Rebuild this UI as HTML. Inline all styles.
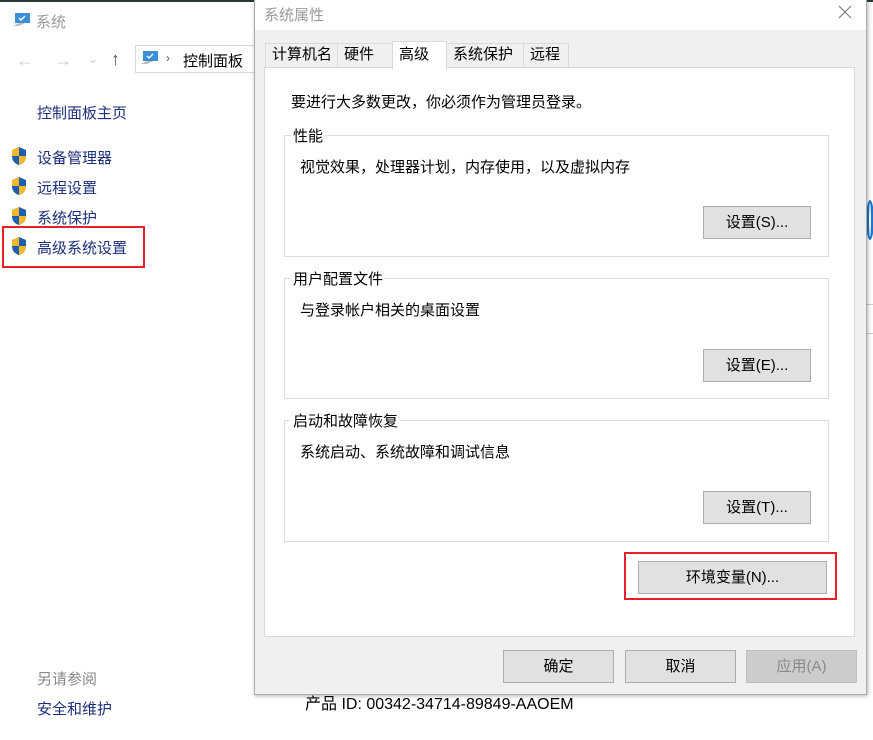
<!DOCTYPE html>
<html><head><meta charset="utf-8"><style>
*{margin:0;padding:0;box-sizing:border-box}
body{width:873px;height:740px;overflow:hidden;background:#fff;position:relative;font-family:"Liberation Sans","Noto Sans CJK SC",sans-serif;font-size:15px;color:#000}
.a{position:absolute}
.btn{position:absolute;background:#e1e1e1;border:1px solid #adadad;text-align:center;font-size:15px}
.grp{position:absolute;border:1px solid #dcdcdc}
.grp .t{position:absolute;top:-11px;left:6px;background:#fff;padding:0 2px;font-size:15px}
.tab{position:absolute;top:43px;height:24px;border:1px solid #d9d9d9;border-bottom:none;background:#f0f0f0;font-size:15px;line-height:22px;padding-left:6px}
.sh{position:absolute;width:18px;height:20px}
</style></head><body>
<div class="a" style="left:0;top:0;width:873px;height:2px;background:#2a3a30"></div>
<svg class="a" style="left:12px;top:12px" width="20" height="18" viewBox="0 0 20 18"><rect x="3" y="1" width="15" height="10" fill="#3a8fd8"/><path d="M7 6l2 2 4-4" stroke="#fff" stroke-width="1.4" fill="none"/><path d="M1 14l6-3h6l-6 3z" fill="#bbb"/></svg>
<div class="a" style="left:36px;top:11px;color:#999">系统</div>
<div class="a" style="left:16px;top:50px;color:#ccc;font-size:18px">←</div>
<div class="a" style="left:54px;top:50px;color:#ccc;font-size:18px">→</div>
<div class="a" style="left:88px;top:52px;color:#ccc;font-size:12px">⌄</div>
<div class="a" style="left:111px;top:49px;color:#555;font-size:18px">↑</div>
<div class="a" style="left:135px;top:45px;width:125px;height:28px;border:1px solid #d9d9d9"></div>
<svg class="a" style="left:140px;top:50px" width="20" height="18" viewBox="0 0 20 18"><rect x="3" y="1" width="15" height="10" fill="#3a8fd8"/><path d="M7 6l2 2 4-4" stroke="#fff" stroke-width="1.4" fill="none"/><path d="M1 14l6-3h6l-6 3z" fill="#bbb"/></svg>
<div class="a" style="left:166px;top:51px;color:#555;font-size:12px">›</div>
<div class="a" style="left:183px;top:50px">控制面板</div>
<div class="a" style="left:37px;top:102px;color:#1c2f7a">控制面板主页</div>
<svg width="0" height="0"><defs><g id="sh"><path d="M9 1L2 4v6c0 5 3 8 7 9 4-1 7-4 7-9V4z" fill="#1c5fb0"/><path d="M9 1v9H2V4z" fill="#f5b82a"/><path d="M9 10h7c0 5-3 8-7 9z" fill="#f5b82a"/></g></defs></svg>
<svg class="sh" style="left:10px;top:146px" viewBox="0 0 18 20"><use href="#sh"/></svg>
<svg class="sh" style="left:10px;top:176px" viewBox="0 0 18 20"><use href="#sh"/></svg>
<svg class="sh" style="left:10px;top:206px" viewBox="0 0 18 20"><use href="#sh"/></svg>
<svg class="sh" style="left:10px;top:236px" viewBox="0 0 18 20"><use href="#sh"/></svg>
<div class="a" style="left:37px;top:147px;color:#1c2f7a">设备管理器</div>
<div class="a" style="left:37px;top:177px;color:#1c2f7a">远程设置</div>
<div class="a" style="left:37px;top:207px;color:#1c2f7a">系统保护</div>
<div class="a" style="left:37px;top:237px;color:#1c2f7a">高级系统设置</div>
<div class="a" style="left:2px;top:226px;width:143px;height:42px;border:2px solid #e8202a"></div>
<div class="a" style="left:37px;top:668px;color:#888">另请参阅</div>
<div class="a" style="left:37px;top:698px;color:#1c2f7a">安全和维护</div>
<div class="a" style="left:305px;top:690px;font-size:16px">产品 ID: 00342-34714-89849-AAOEM</div>
<div class="a" style="left:866px;top:200px;width:8px;height:40px;border:3px solid #1a78d0;border-radius:50%"></div>
<div class="a" style="left:866px;top:304px;width:7px;height:1px;background:#ccc"></div>
<div class="a" style="left:866px;top:333px;width:7px;height:1px;background:#ccc"></div>
<div class="a" style="left:254px;top:0;width:613px;height:695px;background:#f0f0f0;border:1px solid #aaa;box-shadow:1px 1px 4px rgba(0,0,0,.3)"></div>
<div class="a" style="left:255px;top:0;width:611px;height:30px;background:#fff"></div>
<div class="a" style="left:264px;top:4px;color:#999">系统属性</div>
<svg class="a" style="left:838px;top:5px" width="14" height="14" viewBox="0 0 14 14"><path d="M1 1l12 12M13 1L1 13" stroke="#777" stroke-width="1.1"/></svg>
<div class="tab" style="left:265px;width:73px">计算机名</div>
<div class="tab" style="left:337px;width:56px">硬件</div>
<div class="tab" style="left:446px;width:78px">系统保护</div>
<div class="tab" style="left:523px;width:46px">远程</div>
<div class="a" style="left:264px;top:67px;width:591px;height:570px;background:#fff;border:1px solid #d9d9d9"></div>
<div class="a" style="left:392px;top:41px;width:55px;height:28px;background:#fff;border:1px solid #d9d9d9;border-bottom:none;padding-left:6px;line-height:26px">高级</div>
<div class="a" style="left:291px;top:91px">要进行大多数更改，你必须作为管理员登录。</div>
<div class="grp" style="left:284px;top:135px;width:545px;height:122px"><span class="t">性能</span></div>
<div class="a" style="left:300px;top:156px">视觉效果，处理器计划，内存使用，以及虚拟内存</div>
<div class="btn" style="left:703px;top:206px;width:108px;height:33px;line-height:31px">设置(S)...</div>
<div class="grp" style="left:284px;top:278px;width:545px;height:121px"><span class="t">用户配置文件</span></div>
<div class="a" style="left:300px;top:299px">与登录帐户相关的桌面设置</div>
<div class="btn" style="left:703px;top:349px;width:108px;height:33px;line-height:31px">设置(E)...</div>
<div class="grp" style="left:284px;top:420px;width:545px;height:122px"><span class="t">启动和故障恢复</span></div>
<div class="a" style="left:300px;top:441px">系统启动、系统故障和调试信息</div>
<div class="btn" style="left:703px;top:491px;width:108px;height:33px;line-height:31px">设置(T)...</div>
<div class="btn" style="left:638px;top:561px;width:189px;height:33px;line-height:31px">环境变量(N)...</div>
<div class="a" style="left:624px;top:552px;width:213px;height:48px;border:2px solid #e8202a"></div>
<div class="btn" style="left:503px;top:650px;width:111px;height:33px;line-height:31px">确定</div>
<div class="btn" style="left:625px;top:650px;width:111px;height:33px;line-height:31px">取消</div>
<div class="btn" style="left:746px;top:650px;width:111px;height:33px;line-height:31px;background:#cccccc;border-color:#bfbfbf;color:#8a8a8a">应用(A)</div>
</body></html>
